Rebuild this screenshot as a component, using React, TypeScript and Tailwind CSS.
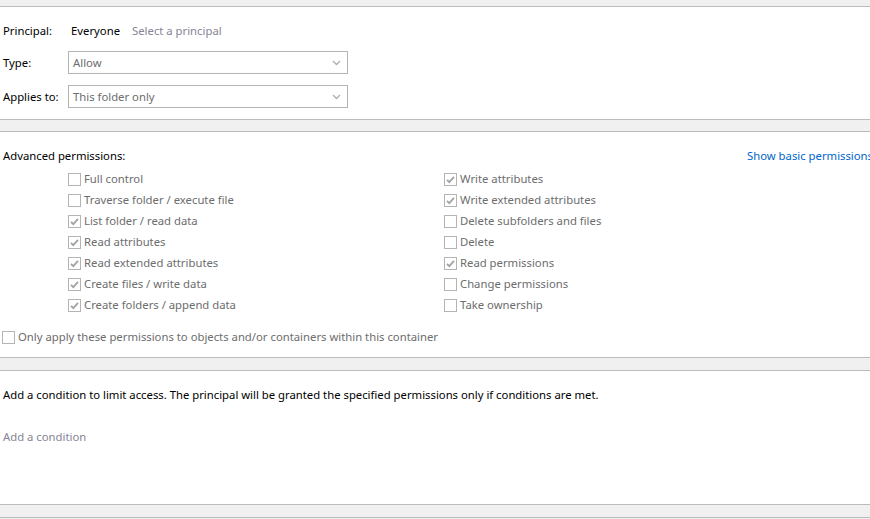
import React from "react";

const Check = ({ checked }: { checked: boolean }) => (
  <span className="flex h-[13px] w-[13px] shrink-0 items-center justify-center border border-[#b4b4b4] bg-white">
    {checked && (
      <svg width="11" height="11" viewBox="0 0 11 11">
        <path d="M2 5.8 L4.3 8.2 L9 2.8" fill="none" stroke="#a3a3a3" strokeWidth="1.8" />
      </svg>
    )}
  </span>
);

const Row = ({ label, checked }: { label: string; checked: boolean }) => (
  <div className="flex h-[21px] items-center gap-[3px] text-[#6d6d6d]">
    <Check checked={checked} />
    <span className="whitespace-nowrap">{label}</span>
  </div>
);

const Select = ({ value }: { value: string }) => (
  <div className="flex h-[23px] w-[280px] items-center justify-between border border-[#b4b4b4] bg-white pl-[4px] pr-[6px] text-[#6d6d6d]">
    <span className="pt-[1px]">{value}</span>
    <svg width="9" height="6" viewBox="0 0 9 6">
      <path d="M1 1 L4.5 4.5 L8 1" fill="none" stroke="#b0b0b0" strokeWidth="1.4" />
    </svg>
  </div>
);

export default function App() {
  const left: [string, boolean][] = [
    ["Full control", false],
    ["Traverse folder / execute file", false],
    ["List folder / read data", true],
    ["Read attributes", true],
    ["Read extended attributes", true],
    ["Create files / write data", true],
    ["Create folders / append data", true],
  ];
  const right: [string, boolean][] = [
    ["Write attributes", true],
    ["Write extended attributes", true],
    ["Delete subfolders and files", false],
    ["Delete", false],
    ["Read permissions", true],
    ["Change permissions", false],
    ["Take ownership", false],
  ];
  return (
    <div
      className="flex h-[519px] w-[870px] flex-col overflow-hidden bg-[#f0f0f0] text-[11.3px] text-black"
      style={{ fontFamily: '"Segoe UI", "Noto Sans", sans-serif' }}
    >
      <div className="h-[7px] shrink-0 border-b border-[#bcbcbc] bg-[#f0f0f0]" />
      <div className="flex h-[112px] shrink-0 flex-col bg-white pl-[3px] pt-[15px]">
        <div className="flex h-[18px] items-center">
          <span className="w-[68px]">Principal:</span>
          <span>Everyone</span>
          <span className="ml-[12px] text-[#858595]">Select a principal</span>
        </div>
        <div className="mt-[11px] flex items-center">
          <span className="w-[65px] pt-[1px]">Type:</span>
          <Select value="Allow" />
        </div>
        <div className="mt-[11px] flex items-center">
          <span className="w-[65px] pt-[1px]">Applies to:</span>
          <Select value="This folder only" />
        </div>
      </div>
      <div className="h-[13px] shrink-0 border-y border-[#bcbcbc] bg-[#f0f0f0]" />
      <div className="flex h-[225px] shrink-0 flex-col bg-white pt-[14px]">
        <div className="flex h-[21px] items-center pl-[3px]">
          <span className="w-[744px] shrink-0">Advanced permissions:</span>
          <span className="whitespace-nowrap text-[#0066cc]">Show basic permissions</span>
        </div>
        <div className="mt-[2px] grid grid-cols-[376px_1fr] pl-[68px]">
          <div className="flex flex-col">
            {left.map(([l, c]) => (
              <Row key={l} label={l} checked={c} />
            ))}
          </div>
          <div className="flex flex-col">
            {right.map(([l, c]) => (
              <Row key={l} label={l} checked={c} />
            ))}
          </div>
        </div>
        <div className="mt-[11px] pl-[2px]">
          <Row label="Only apply these permissions to objects and/or containers within this container" checked={false} />
        </div>
      </div>
      <div className="h-[14px] shrink-0 border-y border-[#bcbcbc] bg-[#f0f0f0]" />
      <div className="flex h-[133px] shrink-0 flex-col bg-white pl-[3px] pt-[13px]">
        <div className="flex h-[21px] items-center pt-[1px]">
          Add a condition to limit access. The principal will be granted the specified permissions only if conditions are met.
        </div>
        <div className="mt-[21px] flex h-[21px] items-center pt-[1px] text-[#858595]">Add a condition</div>
      </div>
      <div className="h-[14px] shrink-0 border-y border-[#bcbcbc] bg-[#f0f0f0]" />
      <div className="flex-1 bg-[#f0f0f0]" />
    </div>
  );
}
